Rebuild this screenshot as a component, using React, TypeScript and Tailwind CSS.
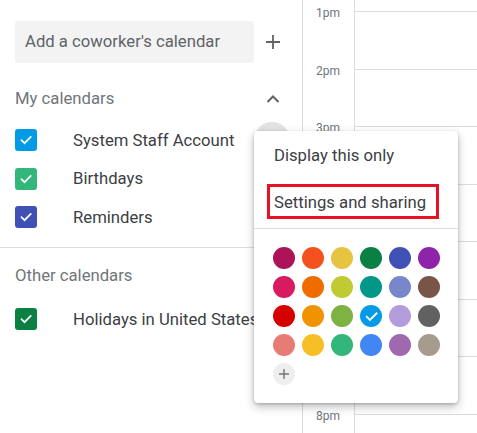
import React from "react";

const calendars = [
  { name: "System Staff Account", color: "bg-[#039be5]" },
  { name: "Birthdays", color: "bg-[#33b679]" },
  { name: "Reminders", color: "bg-[#3f51b5]" },
];

const swatches = [
  ["bg-[#ad1457]", "bg-[#f4511e]", "bg-[#e4c441]", "bg-[#0b8043]", "bg-[#3f51b5]", "bg-[#8e24aa]"],
  ["bg-[#d81b60]", "bg-[#ef6c00]", "bg-[#c0ca33]", "bg-[#009688]", "bg-[#7986cb]", "bg-[#795548]"],
  ["bg-[#d50000]", "bg-[#f09300]", "bg-[#7cb342]", "bg-[#039be5]", "bg-[#b39ddb]", "bg-[#616161]"],
  ["bg-[#e67c73]", "bg-[#f6bf26]", "bg-[#33b679]", "bg-[#4285f4]", "bg-[#9e69af]", "bg-[#a79b8e]"],
];

// labels under the popup are covered, so only the visible ones get text
const hours = ["1pm", "2pm", "3pm", "", "", "", "", "8pm"];

function Check({ size = 14 }: { size?: number }) {
  return (
    <svg width={size} height={size} viewBox="0 0 24 24" fill="none">
      <path d="M4.5 12.5l5 5L20 7" stroke="white" strokeWidth="3" strokeLinecap="square" />
    </svg>
  );
}

function CalRow({ name, color }: { name: string; color: string }) {
  return (
    <div className="flex items-center h-[38.5px] pl-[15px]">
      <div className={`w-[22px] h-[22px] rounded-[3px] flex items-center justify-center ${color}`}>
        <Check />
      </div>
      <span className="ml-[36px] text-[16.7px] text-[#3c4043] whitespace-nowrap">{name}</span>
    </div>
  );
}

export default function App() {
  return (
    <div className="relative w-[477px] h-[433px] overflow-hidden bg-white font-['Roboto',sans-serif]">
      <div className="flex h-full">
        {/* sidebar */}
        <div className="w-[302px] shrink-0 flex flex-col pt-[21px]">
          <div className="flex items-center">
            <div className="ml-[15px] w-[239px] h-[42px] bg-[#f3f3f3] rounded-[3px] flex items-center pl-[10px] text-[16.7px] text-[#5f6368]">
              Add a coworker's calendar
            </div>
            <svg className="ml-[11px]" width="16" height="16" viewBox="0 0 16 16">
              <path d="M8 1v14M1 8h14" stroke="#5f6368" strokeWidth="1.8" />
            </svg>
          </div>
          <div className="flex items-center justify-between pl-[15px] pr-[22px] mt-[23px] h-[26px]">
            <span className="text-[16.7px] text-[#70757a]">My calendars</span>
            <svg width="14" height="10" viewBox="0 0 14 10">
              <path d="M1.5 8L7 2.5 12.5 8" stroke="#5f6368" strokeWidth="2" fill="none" />
            </svg>
          </div>
          <div className="mt-[9px] relative">
            <div className="absolute left-[254px] top-[1px] w-[36px] h-[36px] rounded-full bg-[#e2e2e2]" />
            {calendars.map((c) => (
              <CalRow key={c.name} {...c} />
            ))}
          </div>
          <div className="mt-[10.5px] border-t border-[#dadce0]" />
          <div className="pl-[15px] mt-[15px] h-[26px] flex items-center text-[16.7px] text-[#70757a]">
            Other calendars
          </div>
          <div className="mt-[11px]">
            <CalRow name="Holidays in United States" color="bg-[#0b8043]" />
          </div>
        </div>

        {/* time gutter */}
        <div className="w-[52px] shrink-0 border-l border-[#dadce0] pt-[11px]">
          {hours.map((h, i) => (
            <div key={i} className="h-[57.57px] relative">
              {h && (
                <span className="absolute right-[14px] -top-[6px] text-[12px] leading-[16px] text-[#70757a]">{h}</span>
              )}
            </div>
          ))}
        </div>

        {/* grid */}
        <div className="flex-1 border-l border-[#dadce0] pt-[11px]">
          {hours.map((_, i) => (
            <div key={i} className="h-[57.57px] border-t border-[#dadce0]" />
          ))}
        </div>
      </div>

      {/* popup menu */}
      <div className="absolute left-[254px] top-[131px] w-[204px] h-[272px] bg-white rounded-[4px] shadow-[0_4px_10px_rgba(0,0,0,0.25),0_1px_3px_rgba(0,0,0,0.2)] pt-[7px]">
        <div className="h-[36px] flex items-center pl-[20px] text-[16.7px] text-[#3c4043]">Display this only</div>
        <div className="mt-[10px] ml-[13px] w-[172px] h-[35px] border-[3px] border-[#e81123] flex items-center pl-[4px] pt-[2px] text-[16.7px] text-[#3c4043]">
          Settings and sharing
        </div>
        <div className="mt-[9px] border-t border-[#dadce0]" />
        <div className="pl-[19px] pt-[18px] flex flex-col gap-[7px]">
          {swatches.map((row, i) => (
            <div key={i} className="flex gap-[7px]">
              {row.map((c, j) => (
                <div key={j} className={`w-[22px] h-[22px] rounded-full flex items-center justify-center ${c}`}>
                  {i === 2 && j === 3 && <Check size={15} />}
                </div>
              ))}
            </div>
          ))}
          <div className="w-[22px] h-[22px] rounded-full bg-[#eeeeee] flex items-center justify-center">
            <svg width="12" height="12" viewBox="0 0 12 12">
              <path d="M6 1v10M1 6h10" stroke="#70757a" strokeWidth="1.4" />
            </svg>
          </div>
        </div>
      </div>
    </div>
  );
}
